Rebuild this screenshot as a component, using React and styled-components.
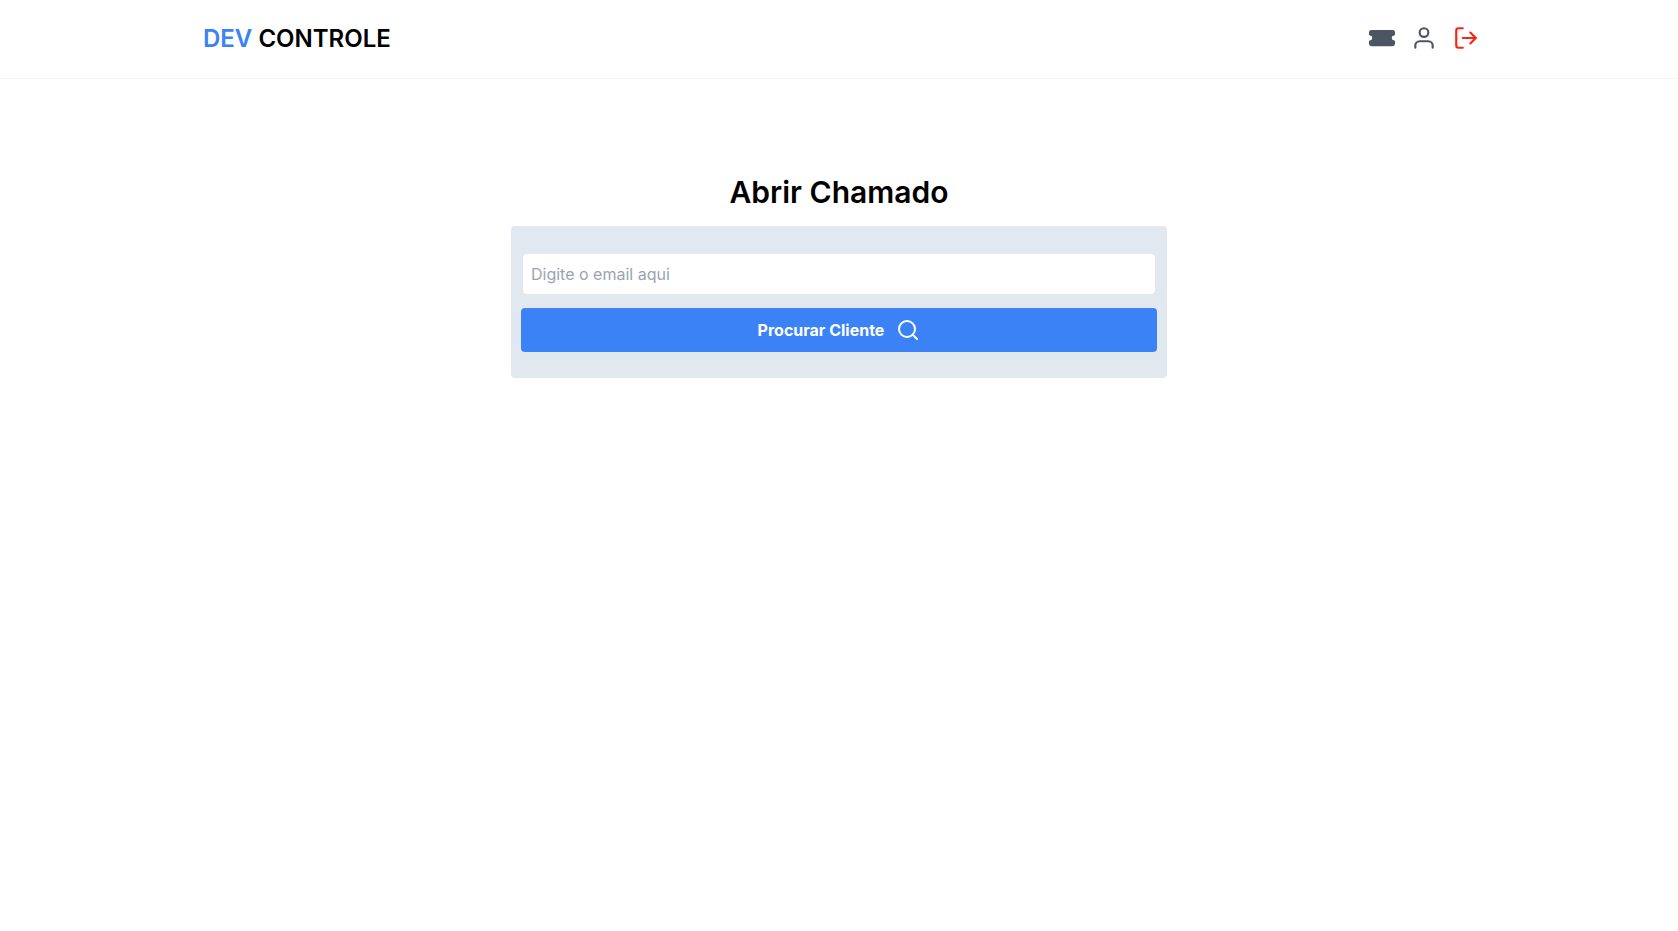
import React from "react";
import styled, { createGlobalStyle } from "styled-components";
import { FiUser, FiLogOut, FiSearch } from "react-icons/fi";
import { BsFillTicketFill } from "react-icons/bs";

const GlobalStyle = createGlobalStyle`
  *, *::before, *::after { box-sizing: border-box; }
  body {
    margin: 0;
    background: #ffffff;
    color: #000000;
    font-family: Inter, "Liberation Sans", sans-serif;
    font-size: 16px;
    line-height: 24px;
  }
  button, input { font: inherit; }
`;

const Header = styled.header`
  display: flex;
  align-items: center;
  padding: 20px 2px;
  border-bottom: 1px solid #f3f4f6;
  background: #ffffff;
`;

const HeaderContent = styled.div`
  display: flex;
  align-items: flex-start;
  justify-content: space-between;
  width: 100%;
  max-width: 1280px;
  margin: 0 auto;
`;

const Logo = styled.a`
  padding: 0 4px;
  color: #000000;
  font-size: 24px;
  font-weight: 600;
  line-height: 38px;
  text-decoration: none;
`;

const LogoAccent = styled.span`
  color: #3b82f6;
`;

const Nav = styled.nav`
  display: flex;
  align-items: center;
  gap: 16px;
  height: 36px;
`;

const NavLink = styled.a`
  display: flex;
  color: #4b5563;
`;

const NavButton = styled.button`
  display: flex;
  padding: 0;
  border: 0;
  background: transparent;
  color: #ff2313;
  cursor: pointer;
`;

const Main = styled.main`
  width: 100%;
  max-width: 672px;
  margin: 95px auto 0;
  padding: 0 8px;
`;

const Title = styled.h1`
  margin: 0;
  font-size: 30px;
  font-weight: 600;
  line-height: 36px;
  text-align: center;
`;

const SearchForm = styled.form`
  display: flex;
  flex-direction: column;
  gap: 12px;
  margin-top: 16px;
  padding: 24px 8px;
  border: 2px solid #e2e8f0;
  border-radius: 4px;
  background: #e2e8f0;
`;

const EmailInput = styled.input`
  width: 100%;
  height: 44px;
  padding: 0 8px;
  border: 2px solid #e2e8f0;
  border-radius: 6px;
  background: #ffffff;
  color: #000000;

  &::placeholder {
    color: #9ca3af;
    opacity: 1;
  }
`;

const SubmitButton = styled.button`
  display: flex;
  align-items: center;
  justify-content: center;
  gap: 12px;
  width: 100%;
  height: 44px;
  padding: 0 8px;
  border: 0;
  border-radius: 4px;
  background: #3b82f6;
  color: #ffffff;
  font-weight: 700;
  cursor: pointer;
`;

export default function App() {
  return (
    <>
      <GlobalStyle />
      <Header>
        <HeaderContent>
          <Logo href="#">
            <LogoAccent>DEV</LogoAccent> CONTROLE
          </Logo>
          <Nav>
            <NavLink href="#chamado" aria-label="Abrir chamado">
              <BsFillTicketFill size={26} />
            </NavLink>
            <NavLink href="#painel" aria-label="Painel">
              <FiUser size={26} />
            </NavLink>
            <NavButton type="button" aria-label="Sair">
              <FiLogOut size={26} />
            </NavButton>
          </Nav>
        </HeaderContent>
      </Header>
      <Main>
        <Title>Abrir Chamado</Title>
        <SearchForm onSubmit={(event) => event.preventDefault()}>
          <EmailInput
            type="email"
            name="email"
            aria-label="Email do cliente"
            placeholder="Digite o email aqui"
          />
          <SubmitButton type="submit">
            Procurar Cliente
            <FiSearch size={24} />
          </SubmitButton>
        </SearchForm>
      </Main>
    </>
  );
}
